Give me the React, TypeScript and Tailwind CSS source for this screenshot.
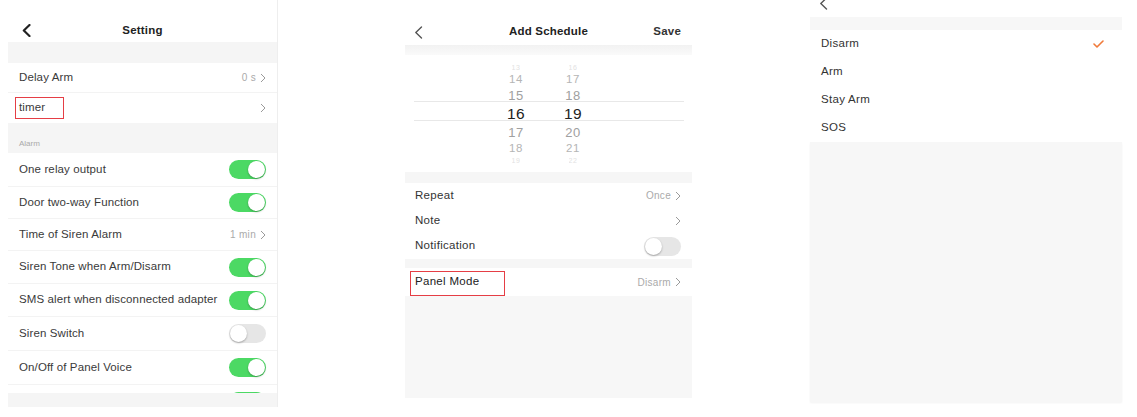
import React from "react";

const font = { fontFamily: '"Liberation Sans", Arial, sans-serif' };

function Chev({ className = "" }: { className?: string }) {
  return (
    <svg width="6" height="10" viewBox="0 0 6 10" className={className}>
      <path d="M1 1 L5 5 L1 9" fill="none" stroke="#9a9a9a" strokeWidth="1" />
    </svg>
  );
}

function Back({ bold = false }: { bold?: boolean }) {
  return (
    <svg width="9" height="13" viewBox="0 0 9 13">
      <path d="M7.5 1 L1.8 6.5 L7.5 12" fill="none" stroke={bold ? "#222" : "#555"} strokeWidth={bold ? 2.2 : 1.4} strokeLinecap="round" strokeLinejoin="round" />
    </svg>
  );
}

function Toggle({ on }: { on: boolean }) {
  return (
    <div className={`flex h-[19px] w-[37px] items-center rounded-full px-[1px] ${on ? "justify-end bg-[#4cd964]" : "justify-start bg-[#e6e6e6]"}`}>
      <div className="h-[17px] w-[17px] rounded-full bg-white shadow-[0_1px_2px_rgba(0,0,0,0.3)]" />
    </div>
  );
}

function Row1({ label, h, right }: { label: string; h: string; right?: React.ReactNode }) {
  return (
    <div className={`flex ${h} shrink-0 items-center justify-between border-b border-[#f3f3f3] pl-[11px] pr-[11px]`}>
      <span className="text-[11.5px] tracking-[0.12px] text-[#3a3a3a]">{label}</span>
      {right}
    </div>
  );
}

function Val({ v }: { v?: string }) {
  return (
    <div className="flex items-center gap-[4px]">
      {v && <span className="text-[10px] tracking-[0.3px] text-[#aaa]">{v}</span>}
      <Chev />
    </div>
  );
}

function Panel1() {
  return (
    <div className="ml-[8px] flex h-[407px] w-[270px] shrink-0 flex-col border-r border-[#eeeeee]">
      <div className="relative flex h-[42px] shrink-0 items-center justify-center">
        <div className="absolute left-[14px] top-[24px]"><Back bold /></div>
        <span className="mt-[19px] text-[11.5px] font-bold tracking-[0.2px] text-[#222]">Setting</span>
      </div>
      <div className="h-[21px] shrink-0 bg-[#f5f5f5]" />
      <Row1 label="Delay Arm" h="h-[30px]" right={<Val v="0 s" />} />
      <div className="relative flex h-[30px] shrink-0 items-center justify-between pl-[11px] pr-[11px]">
        <span className="text-[11.5px] tracking-[0.12px] text-[#3a3a3a]">timer</span>
        <Val />
        <div className="absolute left-[7px] top-[4px] h-[22px] w-[49px] border border-[#e53e45]" />
      </div>
      <div className="flex h-[30px] shrink-0 items-end bg-[#f5f5f5] pb-[3px] pl-[11px]">
        <span className="text-[8px] text-[#aaa]">Alarm</span>
      </div>
      <div className="flex h-[240px] shrink-0 flex-col overflow-hidden">
        <Row1 label="One relay output" h="h-[34px]" right={<Toggle on />} />
        <Row1 label="Door two-way Function" h="h-[32px]" right={<Toggle on />} />
        <Row1 label="Time of Siren Alarm" h="h-[32px]" right={<Val v="1 min" />} />
        <Row1 label="Siren Tone when Arm/Disarm" h="h-[33px]" right={<Toggle on />} />
        <Row1 label="SMS alert when disconnected adapter" h="h-[33px]" right={<Toggle on />} />
        <Row1 label="Siren Switch" h="h-[34px]" right={<Toggle on={false} />} />
        <Row1 label="On/Off of Panel Voice" h="h-[34px]" right={<Toggle on />} />
        <Row1 label="" h="h-[34px]" right={<Toggle on />} />
      </div>
      <div className="h-[14px] shrink-0 bg-[#f5f5f5]" />
    </div>
  );
}

function PickerCol({ vals }: { vals: string[] }) {
  const styles = [
    "h-[9px] text-[7px] text-[#e2e2e2] leading-none overflow-hidden",
    "h-[15px] text-[11.5px] text-[#b5b5b5]",
    "h-[17px] text-[13px] text-[#a0a0a0]",
    "h-[20px] text-[15.5px] text-[#222]",
    "h-[17px] text-[13px] text-[#a0a0a0]",
    "h-[15px] text-[11.5px] text-[#b5b5b5]",
    "h-[9px] text-[7px] text-[#e2e2e2] leading-none overflow-hidden",
  ];
  return (
    <div className="flex w-[40px] flex-col items-center">
      {vals.map((v, i) => (
        <div key={i} className={`flex items-center justify-center tracking-[0.5px] ${styles[i]}`}>{v}</div>
      ))}
    </div>
  );
}

function Row2({ label, h, right }: { label: string; h: string; right?: React.ReactNode }) {
  return (
    <div className={`flex ${h} shrink-0 items-center justify-between pl-[10px] pr-[11px]`}>
      <span className="text-[11.5px] tracking-[0.3px] text-[#333]">{label}</span>
      {right}
    </div>
  );
}

function Panel2() {
  return (
    <div className="ml-[127px] flex h-[398px] w-[287px] shrink-0 flex-col">
      <div className="relative flex h-[45px] shrink-0 items-end justify-center pb-[5px]">
        <div className="absolute left-[9px] top-[26px]"><Back /></div>
        <span className="text-[11.5px] font-bold tracking-[0.2px] text-[#222]">Add Schedule</span>
        <span className="absolute bottom-[5px] right-[11px] text-[11.5px] font-bold tracking-[0.2px] text-[#333]">Save</span>
      </div>
      <div className="h-[10px] shrink-0 bg-gradient-to-b from-[#f2f2f2] to-[#fafafa]" />
      <div className="relative flex h-[117px] shrink-0 justify-center pt-[8px]">
        <div className="absolute left-[9px] right-[8px] top-[46px] h-[20px] border-y border-[#e8e8e8]" />
        <div className="ml-[-8px] flex gap-[17px]">
          <PickerCol vals={["13", "14", "15", "16", "17", "18", "19"]} />
          <PickerCol vals={["16", "17", "18", "19", "20", "21", "22"]} />
        </div>
      </div>
      <div className="h-[11px] shrink-0 bg-[#f6f6f6]" />
      <Row2 label="Repeat" h="h-[25px]" right={<Val v="Once" />} />
      <Row2 label="Note" h="h-[25px]" right={<Val />} />
      <Row2 label="Notification" h="h-[26px]" right={<Toggle on={false} />} />
      <div className="h-[9px] shrink-0 bg-[#f6f6f6]" />
      <div className="relative flex h-[28px] shrink-0 items-center justify-between pl-[10px] pr-[11px]">
        <span className="text-[11.5px] tracking-[0.3px] text-[#222]">Panel Mode</span>
        <Val v="Disarm" />
        <div className="absolute left-[5px] top-[3px] h-[25px] w-[95px] border border-[#e53e45]" />
      </div>
      <div className="flex-1 bg-[#f7f7f7]" />
    </div>
  );
}

function Panel3() {
  const items = [
    { t: "Disarm", h: "h-[27px]", check: true },
    { t: "Arm", h: "h-[29px]" },
    { t: "Stay Arm", h: "h-[28px]" },
    { t: "SOS", h: "h-[28px]" },
  ];
  return (
    <div className="ml-[118px] flex h-[402px] w-[312px] shrink-0 flex-col">
      <div className="relative h-[17px] shrink-0">
        <div className="absolute left-[9px] top-[-3px]"><Back /></div>
      </div>
      <div className="h-[13px] shrink-0 bg-[#f7f7f7]" />
      {items.map((it) => (
        <div key={it.t} className={`flex ${it.h} shrink-0 items-center justify-between pl-[11px] pr-[18px]`}>
          <span className="text-[11.5px] tracking-[0.3px] text-[#333]">{it.t}</span>
          {it.check && (
            <svg width="11" height="8" viewBox="0 0 11 8">
              <path d="M1 4 L4 7 L10 1" fill="none" stroke="#f07a3a" strokeWidth="1.6" strokeLinecap="round" strokeLinejoin="round" />
            </svg>
          )}
        </div>
      ))}
      <div className="flex-1 bg-[#f7f7f7] shadow-[0_1px_2px_rgba(0,0,0,0.05)]" />
    </div>
  );
}

export default function App() {
  return (
    <div className="flex h-[417px] w-[1137px] overflow-hidden bg-white" style={font}>
      <Panel1 />
      <Panel2 />
      <Panel3 />
    </div>
  );
}
